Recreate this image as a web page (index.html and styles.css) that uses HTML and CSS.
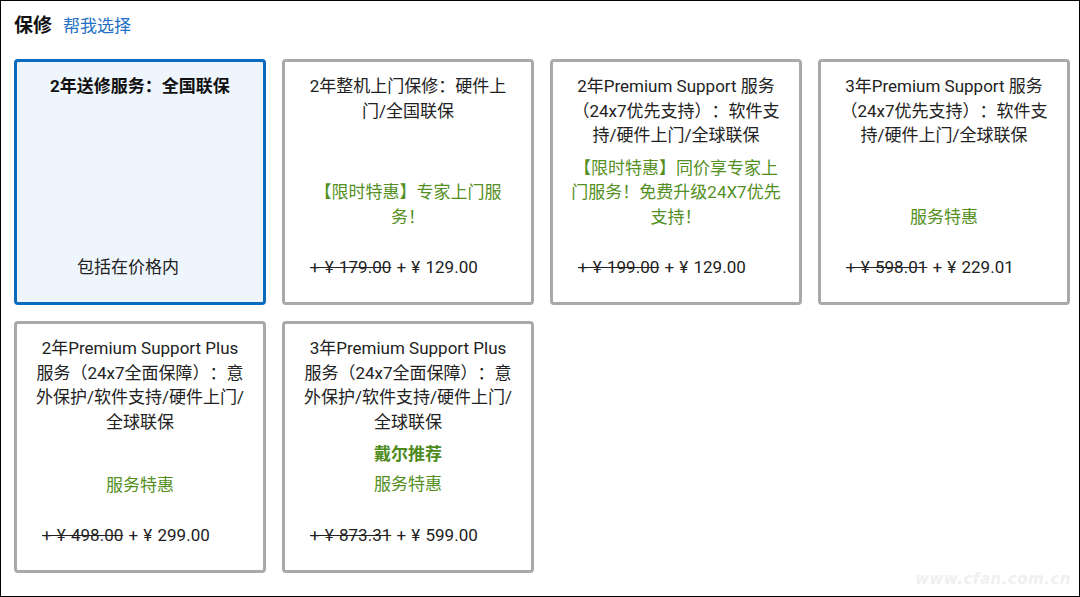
FILE: index.html
```html
<!DOCTYPE html>
<html lang="zh-CN">

<head>
    <meta charset="UTF-8">
    <meta name="viewport" content="width=device-width, initial-scale=1">
    <title>保修</title>
    <link rel="stylesheet" href="styles.css">
</head>

<body>

    <div class="page">
        <div class="section-head">
            <h2>保修</h2>
            <a class="help-link" href="#">帮我选择</a>
        </div>

        <div class="option-grid">
            <!-- Row 1 -->
            <div class="option-card selected">
                <div class="option-title bold">2年送修服务：全国联保</div>
                <div class="option-price included">包括在价格内</div>
            </div>

            <div class="option-card">
                <div class="option-title">2年整机上门保修：硬件上门/全国联保</div>
                <div class="option-promo">【限时特惠】专家上门服务！</div>
                <div class="option-price"><s>+ ¥ 179.00</s> + ¥ 129.00</div>
            </div>

            <div class="option-card">
                <div class="option-title">2年Premium Support 服务（24x7优先支持）：软件支持/硬件上门/全球联保</div>
                <div class="option-promo">【限时特惠】同价享专家上门服务！免费升级24X7优先支持！</div>
                <div class="option-price"><s>+ ¥ 199.00</s> + ¥ 129.00</div>
            </div>

            <div class="option-card">
                <div class="option-title">3年Premium Support 服务（24x7优先支持）：软件支持/硬件上门/全球联保</div>
                <div class="option-promo">服务特惠</div>
                <div class="option-price"><s>+ ¥ 598.01</s> + ¥ 229.01</div>
            </div>

            <!-- Row 2 -->
            <div class="option-card">
                <div class="option-title">2年Premium Support Plus 服务（24x7全面保障）：意外保护/软件支持/硬件上门/全球联保</div>
                <div class="option-promo">服务特惠</div>
                <div class="option-price"><s>+ ¥ 498.00</s> + ¥ 299.00</div>
            </div>

            <div class="option-card">
                <div class="option-title">3年Premium Support Plus 服务（24x7全面保障）：意外保护/软件支持/硬件上门/全球联保</div>
                <div class="option-badge">戴尔推荐</div>
                <div class="option-promo tight">服务特惠</div>
                <div class="option-price"><s>+ ¥ 873.31</s> + ¥ 599.00</div>
            </div>
        </div>

        <!-- watermark from the source screenshot -->
        <div class="watermark">www.cfan.com.cn</div>
    </div>

</body>

</html>
```

FILE: styles.css
```css
/* Warranty picker */
* {
    box-sizing: border-box;
}

body {
    margin: 0;
    font-family: Roboto, "Noto Sans CJK SC", sans-serif;
    color: #222;
    background-color: #fff;
    text-spacing-trim: space-all;
}

.page {
    position: relative;
    width: 1080px;
    height: 597px;
    border: 1px solid #000;
    padding: 0 9px 0 13px;
    overflow: hidden;
}

.section-head {
    display: flex;
    align-items: baseline;
    gap: 11px;
    height: 58px;
    padding-top: 12px;
}

.section-head h2 {
    margin: 0;
    font-size: 19px;
    font-weight: bold;
    color: #111;
    line-height: 26px;
}

.help-link {
    font-size: 17px;
    color: #1f6fc5;
    text-decoration: none;
    line-height: 26px;
}

/* Cards */
.option-grid {
    display: grid;
    grid-template-columns: repeat(4, 252px);
    grid-template-rows: 246px 252px;
    column-gap: 16px;
    row-gap: 16px;
}

.option-card {
    display: flex;
    flex-direction: column;
    border: 3px solid #a9a9a9;
    border-radius: 4px;
    padding: 12px 15px 22px;
    background-color: #fff;
    font-size: 17px;
    line-height: 24.6px;
    text-align: center;
}

.option-card.selected {
    border-color: #0b6cbf;
    background-color: #eef5fc;
}

.option-title {
    color: #222;
}

.option-title.bold {
    font-weight: bold;
    color: #111;
}

.option-badge {
    margin-top: 8px;
    font-weight: bold;
    color: #4e8a1c;
}

.option-promo {
    margin-top: auto;
    padding-top: 6px;
    color: #54901f;
}

.option-promo.tight {
    margin-top: 5px;
    padding-top: 0;
}

.option-price {
    margin-top: 26px;
    padding-left: 10px;
    text-align: left;
    word-spacing: 1px;
    color: #222;
}

.option-price s {
    text-decoration-thickness: 1px;
}

.option-price.included {
    margin-top: auto;
    padding-left: 45px;
}

.watermark {
    position: absolute;
    right: 8px;
    bottom: 8px;
    font-family: "DejaVu Sans", sans-serif;
    font-size: 15px;
    font-style: italic;
    font-weight: bold;
    color: #f0f0f0;
    letter-spacing: 0.5px;
}
```
